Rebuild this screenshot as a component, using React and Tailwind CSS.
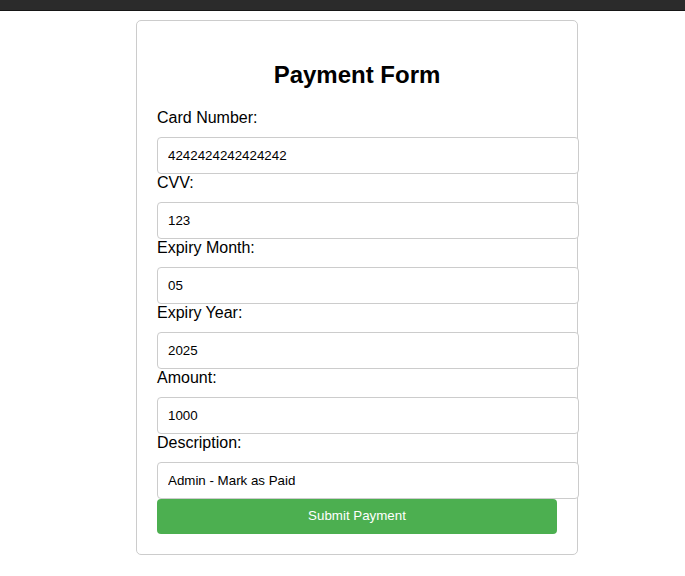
import React, { useState } from "react";

const fields = [
  { name: "card_number", label: "Card Number:", value: "4242424242424242" },
  { name: "cvv", label: "CVV:", value: "123" },
  { name: "expiry_month", label: "Expiry Month:", value: "05" },
  { name: "expiry_year", label: "Expiry Year:", value: "2025" },
  { name: "amount", label: "Amount:", value: "1000" },
  { name: "description", label: "Description:", value: "Admin - Mark as Paid" },
];

const App = () => {
  const [values, setValues] = useState(
    Object.fromEntries(fields.map((f) => [f.name, f.value]))
  );

  const handleChange = (e) => {
    const { name, value } = e.target;
    setValues({ ...values, [name]: value });
  };

  return (
    <div className="min-h-[576px] bg-white font-['Liberation_Sans',Arial,sans-serif] text-black">
      {/* Top bar */}
      <div className="h-[11px] bg-[#2b2b2b] border-b border-[#161616]"></div>

      <div className="pl-[136px] pt-[9px]">
        <form
          onSubmit={(e) => e.preventDefault()}
          className="w-[442px] border border-[#cccccc] rounded-[5px] p-[20px]"
        >
          <h2 className="text-[24px] leading-[27.6px] font-bold text-center mt-[20px] mb-[20px]">
            Payment Form
          </h2>

          {fields.map((f) => (
            <div key={f.name}>
              <label className="block text-[16px] leading-[18px] mb-[10px]">{f.label}</label>
              <input
                type="text"
                name={f.name}
                value={values[f.name]}
                onChange={handleChange}
                className="block w-[422px] h-[37px] px-[10px] border border-[#cccccc] rounded-[4px] text-[13.33px] text-black bg-white outline-none"
              />
            </div>
          ))}

          <button
            type="submit"
            className="block w-[400px] h-[35px] bg-[#4caf50] text-white text-[13.33px] rounded-[4px]"
          >
            Submit Payment
          </button>
        </form>
      </div>
    </div>
  );
};

export default App;
